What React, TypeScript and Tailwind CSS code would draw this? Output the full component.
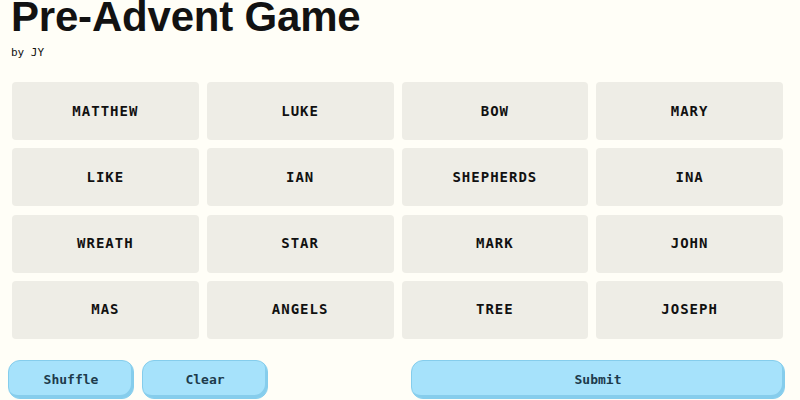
import React from "react";

const words = [
  "MATTHEW", "LUKE", "BOW", "MARY",
  "LIKE", "IAN", "SHEPHERDS", "INA",
  "WREATH", "STAR", "MARK", "JOHN",
  "MAS", "ANGELS", "TREE", "JOSEPH",
];

const mono = { fontFamily: '"DejaVu Sans Mono", "Liberation Mono", monospace' };

function Btn({ label, className }: { label: string; className: string }) {
  return (
    <button
      className={`h-[39px] rounded-[12px] bg-[#a6e2fb] border border-[#85cdec] shadow-[inset_-2px_-3px_0_#86cdec] text-[13px] font-bold text-[#1d3b4c] ${className}`}
      style={mono}
    >
      {label}
    </button>
  );
}

export default function App() {
  return (
    <div className="w-[800px] h-[400px] overflow-hidden bg-[#fffef7]">
      <h1
        className="mt-[-4px] ml-[11px] text-[42px] leading-none font-bold text-[#121212] tracking-[-0.2px]"
        style={{ fontFamily: '"Liberation Sans", Arial, sans-serif' }}
      >
        Pre-Advent Game
      </h1>
      <div className="mt-[8px] ml-[11px] text-[11px] leading-[14px] text-[#111]" style={mono}>
        by JY
      </div>
      <div className="mt-[22px] ml-[12px] w-[771px] grid grid-cols-4 gap-x-[8px] gap-y-[8.3px]">
        {words.map((w) => (
          <div
            key={w}
            className="h-[58px] rounded-[4px] bg-[#eeede6] flex items-center justify-center text-[14px] font-bold text-[#111] tracking-[1px]"
            style={mono}
          >
            {w}
          </div>
        ))}
      </div>
      <div className="mt-[21px] ml-[8px] flex">
        <Btn label="Shuffle" className="w-[126px]" />
        <Btn label="Clear" className="w-[126px] ml-[8px]" />
        <Btn label="Submit" className="w-[374px] ml-[143px]" />
      </div>
    </div>
  );
}
